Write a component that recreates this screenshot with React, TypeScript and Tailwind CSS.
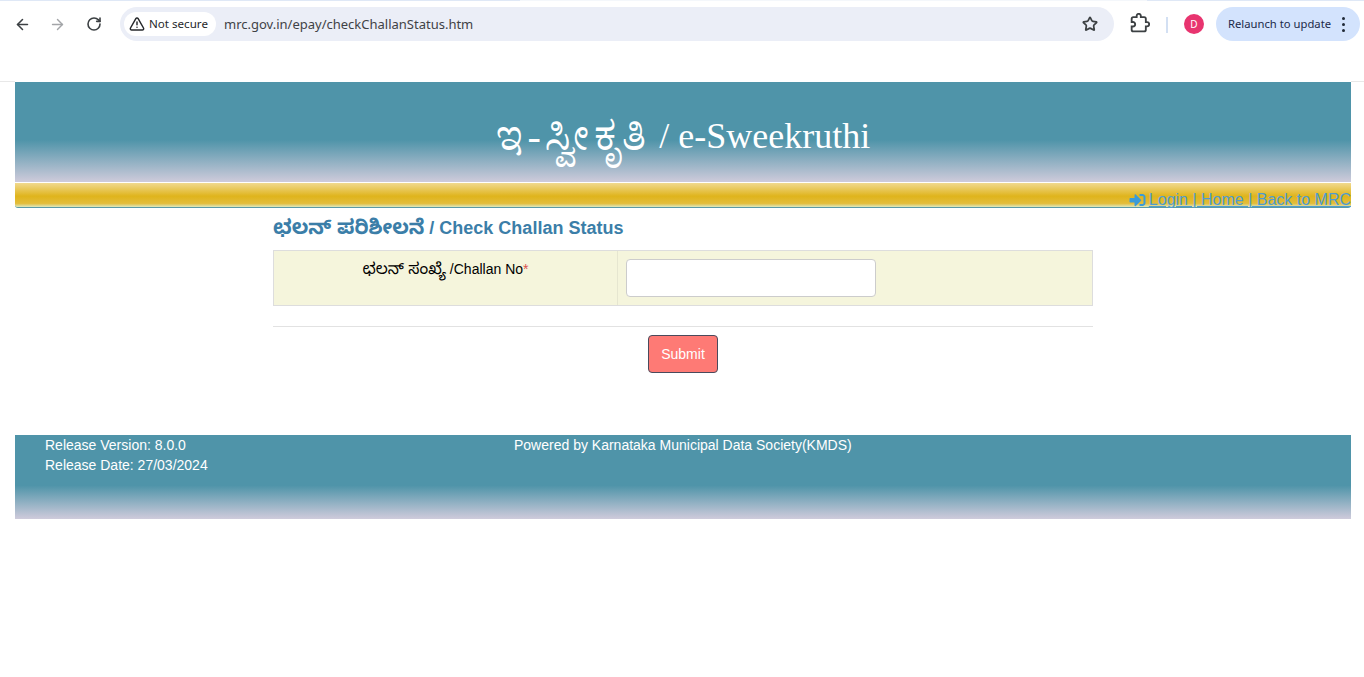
import { ArrowLeft, ArrowRight, RotateCw, Star, TriangleAlert } from "lucide-react";
import { FaSignInAlt } from "react-icons/fa";

const sans = "font-['Liberation_Sans','Noto_Sans_Kannada','Noto_Sans',sans-serif]";

function BrowserBar() {
  return (
    <div className="h-[82px] bg-white font-['Noto_Sans',sans-serif]">
      <div className="flex h-px">
        <div className="w-[520px] bg-[#dfe8f6]" />
        <div className="w-[627px] bg-[#f4f7fb]" />
        <div className="flex-1 bg-[#dfe8f6]" />
      </div>
      <div className="flex h-[51px] items-start pt-[6px]">
        <div className="flex h-[34px] w-[120px] items-center">
          <ArrowLeft className="ml-[14px] h-[17px] w-[17px] text-[#3c4043]" strokeWidth={2.2} />
          <ArrowRight className="ml-[18px] h-[17px] w-[17px] text-[#a3a5a8]" strokeWidth={2} />
          <RotateCw className="ml-[20px] h-[16px] w-[16px] text-[#3c4043]" strokeWidth={2.4} />
        </div>
        <div className="flex h-[34px] w-[994px] items-center rounded-full bg-[#ebeef7] pl-[4px] pr-[16px]">
          <div className="flex h-[24px] w-[92px] items-center rounded-full bg-white pl-[5px] text-[#26282b]">
            <TriangleAlert className="h-[16px] w-[16px]" strokeWidth={2.2} />
            <span className="ml-[4px] whitespace-nowrap text-[11.6px]">Not secure</span>
          </div>
          <span className="ml-[8px] mt-[1px] whitespace-nowrap text-[13px] text-[#3f4246]">mrc.gov.in/epay/checkChallanStatus.htm</span>
          <Star className="ml-auto h-[16px] w-[16px] text-[#3c4043]" strokeWidth={2.6} />
        </div>
        <svg viewBox="0 0 24 24" className="ml-[16px] mt-[6px] h-[20px] w-[20px]" fill="none" stroke="#3c4043" strokeWidth="2.2">
          <path d="M20.5 11H19V7c0-1.1-.9-2-2-2h-4V3.5C13 2.12 11.88 1 10.5 1S8 2.12 8 3.5V5H4c-1.1 0-2 .9-2 2v3.8h1.5c1.49 0 2.7 1.21 2.7 2.7S4.99 16.2 3.5 16.2H2V20c0 1.1.9 2 2 2h13c1.1 0 2-.9 2-2v-4h1.5c1.38 0 2.5-1.12 2.5-2.5S21.88 11 20.5 11z" />
        </svg>
        <div className="ml-[16px] mt-[10px] h-[16px] w-[2px] bg-[#d3e0f3]" />
        <div className="ml-[16px] mt-[7px] flex h-[20px] w-[20px] items-center justify-center rounded-full bg-[#e8346f] text-[10px] text-white">D</div>
        <div className="ml-[12px] flex h-[34px] w-[144px] items-center rounded-full bg-[#d3e3fd] pl-[12px] text-[#1b2a4a]">
          <span className="w-[103px] whitespace-nowrap text-[11.25px]">Relaunch to update</span>
          <div className="ml-[11px] flex flex-col gap-[3px]">
            <div className="h-[3px] w-[3px] rounded-full bg-[#1f2937]" />
            <div className="h-[3px] w-[3px] rounded-full bg-[#1f2937]" />
            <div className="h-[3px] w-[3px] rounded-full bg-[#1f2937]" />
          </div>
        </div>
      </div>
      <div className="flex h-[30px] items-end">
        <div className="h-px w-[15px] bg-[#e8e8e8]" />
        <div className="flex-1" />
        <div className="h-px w-[13px] bg-[#e8e8e8]" />
      </div>
    </div>
  );
}

export default function App() {
  return (
    <div className={`min-h-[677px] bg-white ${sans}`}>
      <BrowserBar />
      <div className="pl-[15px] pr-[13px]">
        <div className="flex h-[100px] items-start justify-center whitespace-pre bg-[linear-gradient(to_bottom,#4f94a9_0%,#4f94a9_58%,#cfcbdb_100%)] pt-[31px] font-['Liberation_Serif','Noto_Serif_Kannada','Noto_Sans',serif] text-[36px] leading-[47px] text-white">
          <span className="text-[40px] tracking-[3.9px]">ಇ-ಸ್ವೀಕೃತಿ</span> / e-Sweekruthi
        </div>
        <div className="mt-px flex h-[25px] items-start justify-end rounded-b-[3px] border-b border-[#5a9aa5] bg-[linear-gradient(to_bottom,#f1d98f_0%,#dfb41c_55%,#e3bd3a_85%,#dce8c0_100%)] pt-[7px] text-[16px] leading-[20px] text-[#4f9ccf]">
          <FaSignInAlt className="mr-[3px] mt-[2px] h-[16px] w-[17px] text-[#3a9bd8]" />
          <span className="whitespace-nowrap underline">Login | Home | Back to MRC</span>
        </div>
        <div className="mx-auto w-[820px]">
          <h1 className="mt-[8px] h-[22px] whitespace-nowrap text-[18px] font-bold leading-[22px] text-[#3b7ea8]">
            <span className="text-[20.3px]">ಛಲನ್ ಪರಿಶೀಲನೆ</span> / Check Challan Status
          </h1>
          <div className="mt-[12px] flex h-[56px] border border-[#dddddd] bg-[#f5f5dc] text-[14px] leading-[20px] text-black">
            <div className="w-[344px] border-r border-[#e6e6d0] pt-[8px] text-center">
              <span className="text-[15.8px]">ಛಲನ್ ಸಂಖ್ಯೆ</span> /Challan No<span className="text-[#d9534f]">*</span>
            </div>
            <div className="flex-1 pl-[8px] pt-[8px]">
              <input type="text" aria-label="Challan No" className="block h-[38px] w-[250px] rounded-[4px] border border-[#cccccc] bg-white" />
            </div>
          </div>
          <div className="mt-[20px] h-px bg-[#e2e2e2]" />
          <div className="mt-[8px] flex justify-center">
            <button type="button" className="h-[38px] w-[70px] rounded-[4px] border border-[#4a4a5c] bg-[#fe7a75] text-[14px] text-white">Submit</button>
          </div>
        </div>
        <div className="mt-[62px] h-[84px] bg-[linear-gradient(to_bottom,#4f94a9_0%,#4f94a9_60%,#cfcbdb_100%)] text-[14px] leading-[20px] text-white">
          <div className="flex">
            <div className="w-[499px] pl-[30px]">
              <div>Release Version: 8.0.0</div>
              <div>Release Date: 27/03/2024</div>
            </div>
            <div className="whitespace-nowrap">Powered by Karnataka Municipal Data Society(KMDS)</div>
          </div>
        </div>
      </div>
    </div>
  );
}
